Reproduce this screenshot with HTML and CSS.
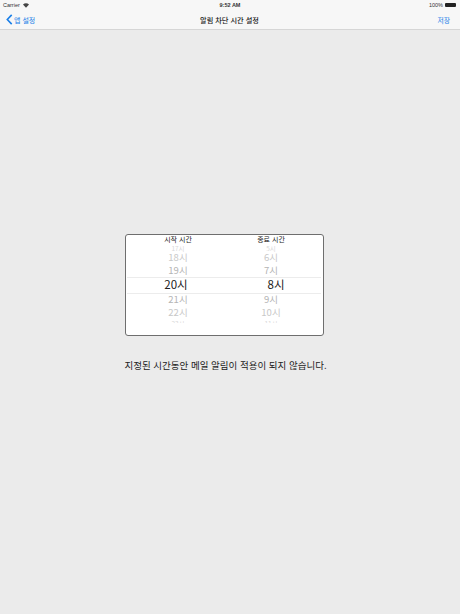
FILE: index.html
```html
<!DOCTYPE html>
<html lang="ko">
<head>
<meta charset="utf-8">
<title>알림 차단 시간 설정</title>
<link rel="stylesheet" href="styles.css">
</head>
<body>
<div class="screen">
  <header class="top">
    <div class="status">
      <div class="status-left">
        <span>Carrier</span>
        <svg class="wifi" viewBox="0 0 12 9" width="6" height="5"><path d="M6 9 0 2.6C3.4-.8 8.6-.8 12 2.6Z" fill="#444"/></svg>
      </div>
      <span class="clock">9:52 AM</span>
      <div class="status-right">
        <span>100%</span>
        <span class="battery"></span>
      </div>
    </div>
    <nav class="nav">
      <a class="back">
        <svg viewBox="0 0 8 13" width="7" height="11"><path d="M6.6 1 1.4 6.5l5.2 5.500" fill="none" stroke="#1a7fe8" stroke-width="1.900"/></svg>
        <span>앱 설정</span>
      </a>
      <h1 class="title">알림 차단 시간 설정</h1>
      <a class="save">저장</a>
    </nav>
  </header>
  <main class="content">
    <section class="picker">
      <div class="heads">
        <span>시작 시간</span>
        <span>종료 시간</span>
      </div>
      <div class="wheels">
        <div class="band"></div>
        <ul class="wheel">
          <li class="far">17시</li>
          <li class="near2">18시</li>
          <li class="near">19시</li>
          <li class="sel sel-l">20시</li>
          <li class="near">21시</li>
          <li class="near2">22시</li>
          <li class="far">23시</li>
        </ul>
        <ul class="wheel">
          <li class="far">5시</li>
          <li class="near2">6시</li>
          <li class="near">7시</li>
          <li class="sel sel-r">8시</li>
          <li class="near">9시</li>
          <li class="near2">10시</li>
          <li class="far">11시</li>
        </ul>
      </div>
    </section>
    <p class="note">지정된 시간동안 메일 알림이 적용이 되지 않습니다.</p>
  </main>
</div>
</body>
</html>
```
FILE: styles.css
```css
* { box-sizing: border-box; }
html, body { margin: 0; padding: 0; }
body {
  width: 460px;
  height: 614px;
  overflow: hidden;
  background: #ebebeb;
  font-family: "Noto Sans CJK KR", "Liberation Sans", sans-serif;
  color: #111;
}
.screen { display: flex; flex-direction: column; height: 614px; }
.top {
  height: 30px;
  background: #f7f7f7;
  border-bottom: 1px solid #d6d6d6;
  flex: none;
}
.status {
  height: 10px;
  display: grid;
  grid-template-columns: 1fr auto 1fr;
  align-items: center;
  padding: 0 3px;
  font-family: "Liberation Sans", sans-serif;
  font-size: 5.500px;
  color: #333;
}
.status-left { display: flex; align-items: center; gap: 3px; }
.status-right { display: flex; align-items: center; justify-content: flex-end; gap: 2px; }
.clock { font-weight: 700; font-size: 5.500px; }
.battery { width: 11px; height: 4px; background: #222; border-radius: 1px; margin-right: 1px; }
.nav {
  height: 19px;
  display: grid;
  grid-template-columns: 1fr auto 1fr;
  align-items: center;
  padding: 0 7px 0 6px;
}
.back { display: flex; align-items: center; gap: 1px; color: #1a7fe8; font-size: 7px; }
.title { margin: 0; font-size: 7.200px; font-weight: 500; color: #222; }
.save { justify-self: end; margin-right: 3px; color: #1a7fe8; font-size: 6.800px; }
.content {
  flex: 1;
  display: flex;
  flex-direction: column;
  align-items: center;
  padding-top: 204px;
}
.picker {
  width: 199px;
  height: 102px;
  margin-right: 12px;
  background: #fff;
  border: 1px solid #6e6e6e;
  border-radius: 3px;
  overflow: hidden;
}
.heads {
  height: 11px;
  display: grid;
  grid-template-columns: 93px 93px;
  padding-left: 6px;
  font-size: 7px;
  line-height: 9px;
  color: #222;
  text-align: center;
}
.wheels {
  position: relative;
  display: grid;
  grid-template-columns: 93px 93px;
  padding-left: 6px;
  height: 77px;
}
.band {
  position: absolute;
  left: 1px;
  right: 2px;
  top: 31px;
  height: 17px;
  border-top: 1px solid #ececec;
  border-bottom: 1px solid #ececec;
}
.wheel {
  list-style: none;
  margin: 0;
  padding: 0;
  text-align: center;
  font-size: 9.500px;
  overflow: hidden;
}
.wheel li { line-height: 13px; height: 13px; }
.wheel li.far { height: 8px; line-height: 8px; font-size: 6.500px; color: #d8d8d8; }
.wheel li.far:first-child { height: 5px; line-height: 5px; }
.near2 { color: #c8c8c8; }
.near { color: #b4b4b4; }
.wheel li.sel {
  height: 14px;
  line-height: 14px;
  margin-bottom: 2px;
  font-size: 11.500px;
  color: #222;
  position: relative;
}
.sel-l { left: -2px; }
.sel-r { left: 5px; }
.note {
  margin: 22px 0 0 -9px;
  font-size: 9.500px;
  line-height: 14px;
  color: #222;
  white-space: nowrap;
}
```
